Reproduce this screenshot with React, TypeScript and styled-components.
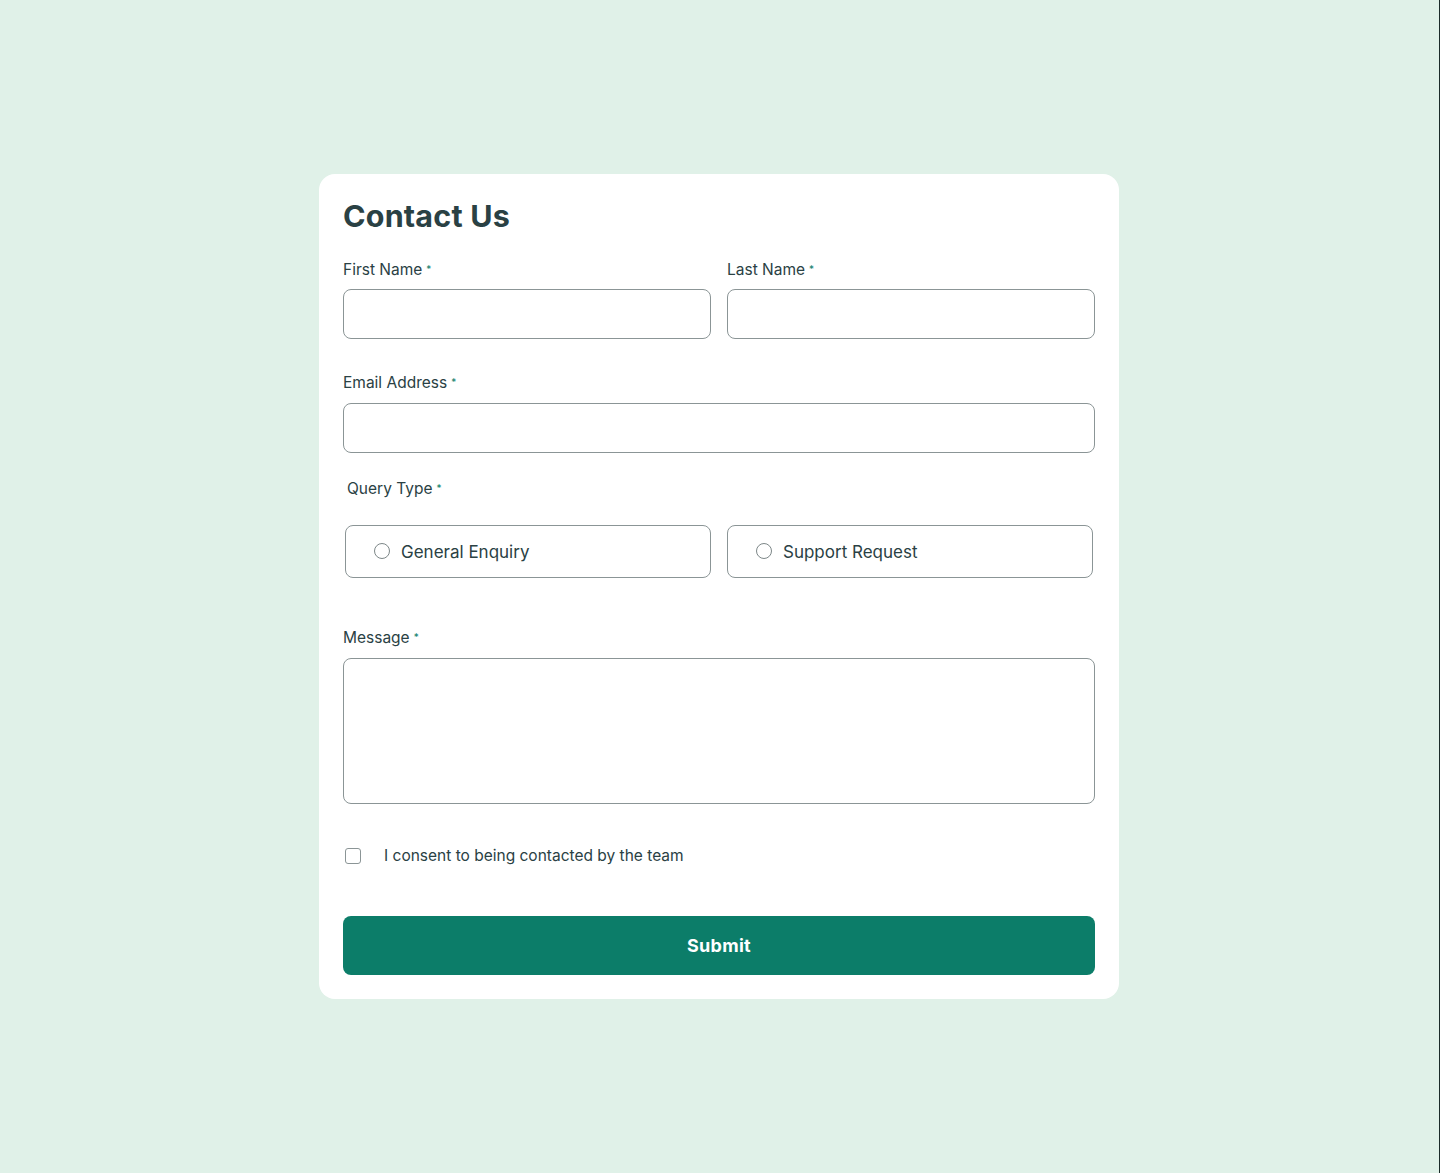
import React, { useState } from 'react';
import styled, { createGlobalStyle } from 'styled-components';

const GlobalStyle = createGlobalStyle`
  * { box-sizing: border-box; }
  html, body { margin: 0; padding: 0; }
  body {
    background: #e0f1e8;
    font-family: 'Inter', 'Liberation Sans', sans-serif;
    color: #2a4144;
  }
`;

const Page = styled.main`
  min-height: 1173px;
  display: flex;
  justify-content: center;
  align-items: flex-start;
  padding: 174px 2px 0 0;
  box-shadow: inset -1px 0 0 #1c2b29;
`;

const Card = styled.form`
  width: 800px;
  background: #ffffff;
  border-radius: 16px;
  padding: 24px;
  display: flex;
  flex-direction: column;
`;

const Title = styled.h1`
  margin: 0 0 23px;
  font-size: 30.5px;
  line-height: 36px;
  font-weight: 700;
  letter-spacing: 0.2px;
  color: #2a4144;
`;

const Row = styled.div`
  display: grid;
  grid-template-columns: 1fr 1fr;
  gap: 16px;
`;

const Field = styled.div<{ $mt?: number }>`
  display: flex;
  flex-direction: column;
  margin-top: ${p => p.$mt ?? 0}px;
`;

const Label = styled.label<{ $indent?: number; $gap?: number }>`
  font-size: 15.5px;
  line-height: 24px;
  padding-top: 1px;
  color: #2a4144;
  padding-left: ${p => p.$indent ?? 0}px;
  margin-bottom: ${p => (p.$gap ?? 8) - 1}px;
`;

const Star = styled.span`
  color: #0c7d69;
  font-size: 10px;
  line-height: 0;
  margin-left: 4px;
  vertical-align: 2px;
`;

const Input = styled.input`
  height: 50px;
  width: 100%;
  border: 1px solid #8b9596;
  border-radius: 8px;
  padding: 0 16px;
  font: inherit;
  font-size: 16px;
  color: #2a4144;
  outline: none;
`;

const TextArea = styled.textarea`
  display: block;
  height: 146px;
  width: 100%;
  border: 1px solid #8b9596;
  border-radius: 8px;
  padding: 12px 16px;
  font: inherit;
  font-size: 16px;
  resize: none;
  outline: none;
`;

const RadioGroup = styled.div`
  display: grid;
  grid-template-columns: 366px 366px;
  gap: 16px;
  padding: 0 2px;
`;

const RadioOption = styled.label`
  height: 53px;
  display: flex;
  align-items: center;
  gap: 11px;
  padding-left: 28px;
  border: 1px solid #8b9596;
  border-radius: 8px;
  font-size: 17px;
  color: #2a4144;
  cursor: pointer;
`;

const RadioDot = styled.span<{ $on: boolean }>`
  width: 16px;
  height: 16px;
  margin-top: -2px;
  border-radius: 50%;
  border: 1.5px solid #7d8788;
  display: flex;
  align-items: center;
  justify-content: center;
  &::after {
    content: '';
    width: 8px;
    height: 8px;
    border-radius: 50%;
    background: ${p => (p.$on ? '#0c7d69' : 'transparent')};
  }
`;

const ConsentRow = styled.label`
  display: flex;
  align-items: center;
  gap: 23px;
  margin-top: 44px;
  padding-left: 2px;
  font-size: 15.5px;
  line-height: 16px;
  color: #2a4144;
  cursor: pointer;
`;

const Box = styled.span<{ $on: boolean }>`
  width: 16px;
  height: 16px;
  border: 1.5px solid #8b9596;
  border-radius: 3px;
  background: ${p => (p.$on ? '#0c7d69' : '#fff')};
`;

const Submit = styled.button`
  margin-top: 52px;
  height: 59px;
  width: 100%;
  border: none;
  border-radius: 8px;
  background: #0c7d69;
  color: #ffffff;
  font: inherit;
  font-size: 18px;
  font-weight: 700;
  letter-spacing: 0.3px;
  cursor: pointer;
`;

const Required = () => <Star>*</Star>;

export default function App() {
  const [query, setQuery] = useState<string | null>(null);
  const [consent, setConsent] = useState(false);

  return (
    <>
      <GlobalStyle />
      <Page>
        <Card onSubmit={e => e.preventDefault()}>
          <Title>Contact Us</Title>
          <Row>
            <Field>
              <Label>First Name<Required /></Label>
              <Input type="text" />
            </Field>
            <Field>
              <Label>Last Name<Required /></Label>
              <Input type="text" />
            </Field>
          </Row>
          <Field $mt={31}>
            <Label $gap={9}>Email Address<Required /></Label>
            <Input type="email" />
          </Field>
          <Field $mt={23}>
            <Label $indent={4} $gap={25}>Query Type<Required /></Label>
            <RadioGroup>
              {['General Enquiry', 'Support Request'].map(q => (
                <RadioOption key={q} onClick={() => setQuery(q)}>
                  <RadioDot $on={query === q} />
                  {q}
                </RadioOption>
              ))}
            </RadioGroup>
          </Field>
          <Field $mt={47}>
            <Label $gap={9}>Message<Required /></Label>
            <TextArea />
          </Field>
          <ConsentRow onClick={() => setConsent(c => !c)}>
            <Box $on={consent} />
            I consent to being contacted by the team
          </ConsentRow>
          <Submit type="submit">Submit</Submit>
        </Card>
      </Page>
    </>
  );
}
